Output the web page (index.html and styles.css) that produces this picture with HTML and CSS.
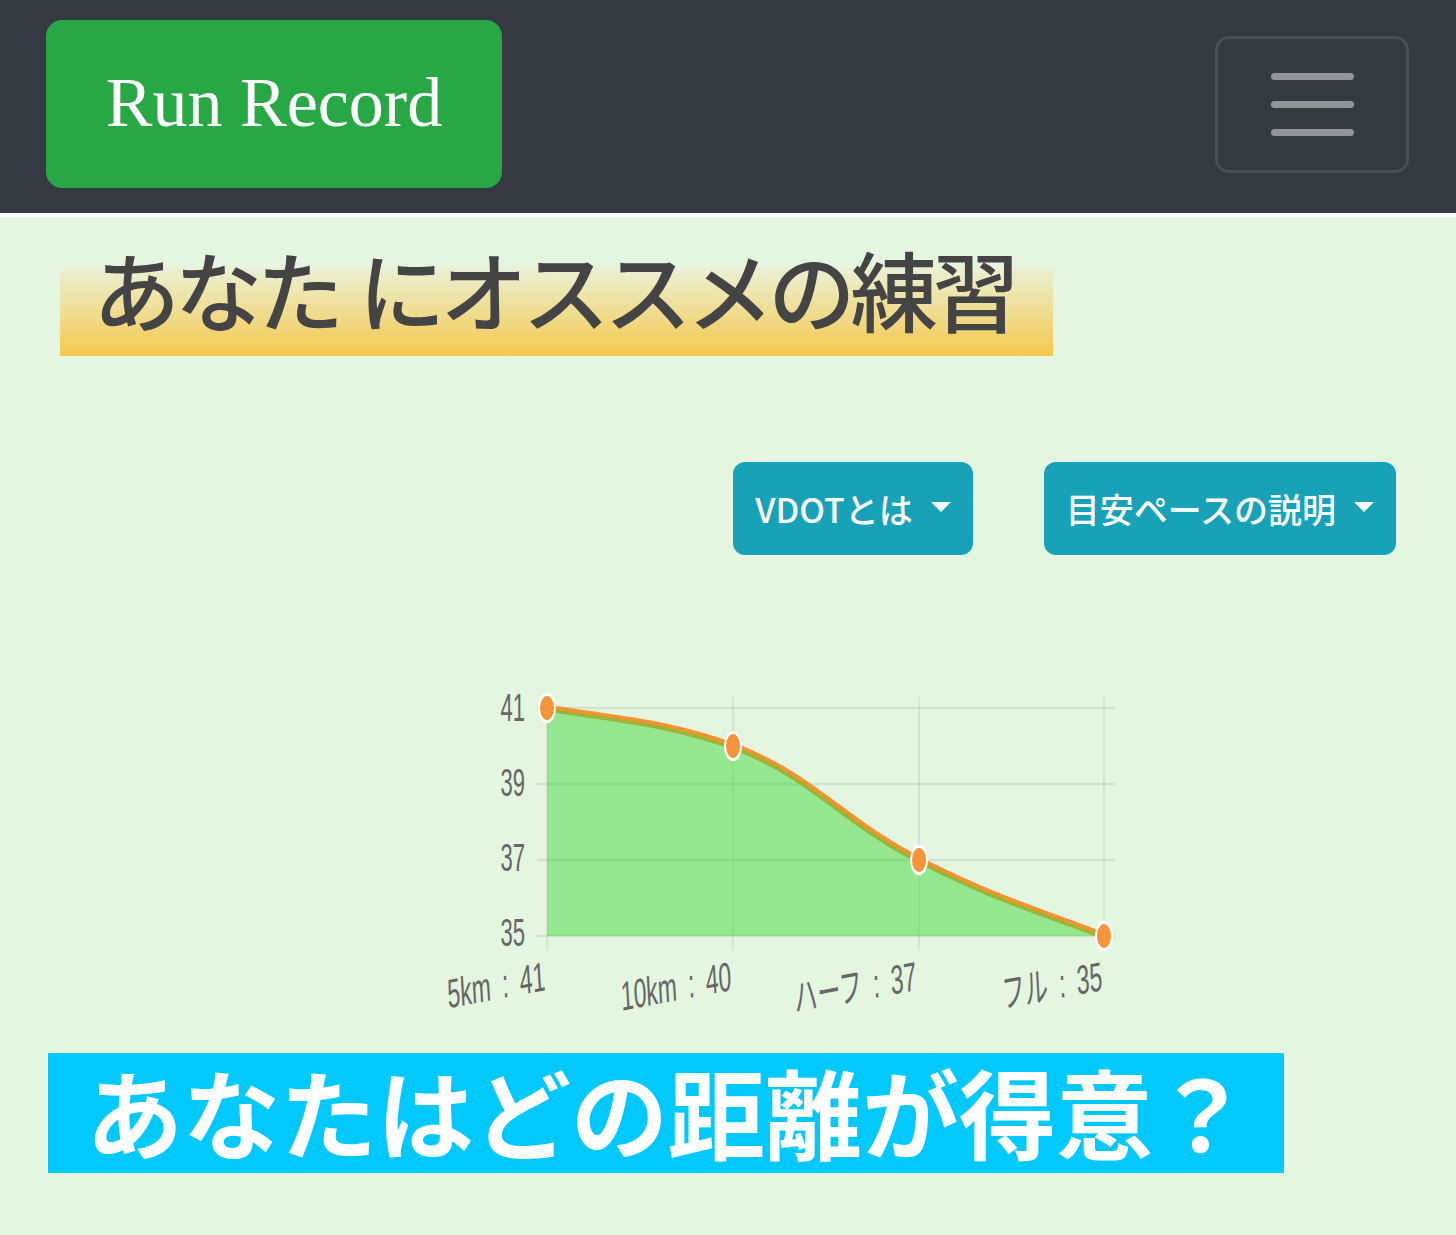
FILE: index.html
```html
<!DOCTYPE html>
<html lang="ja">
<head>
<meta charset="utf-8">
<title>Run Record</title>
<link rel="stylesheet" href="styles.css">
</head>
<body>
<nav class="navbar">
  <a class="brand" href="#">Run Record</a>
  <button class="toggler" type="button" aria-label="menu">
    <span class="bar"></span>
    <span class="bar"></span>
    <span class="bar"></span>
  </button>
</nav>
<main class="content">
  <h2 class="marker-heading">あなた にオススメの練習</h2>
  <div class="actions">
    <button class="btn-info dropdown-toggle" type="button">VDOTとは</button>
    <button class="btn-info dropdown-toggle" type="button">目安ペースの説明</button>
  </div>
  <div class="chart">
    <svg class="chart-svg" width="700" height="350" viewBox="440 680 700 350">
      <g class="grid">
        <line class="h" x1="537" y1="708" x2="1115" y2="708"/>
        <line class="h" x1="537" y1="784" x2="1115" y2="784"/>
        <line class="h" x1="537" y1="860" x2="1115" y2="860"/>
        <line class="h" x1="537" y1="936" x2="1115" y2="936"/>
        <line class="v" x1="547" y1="697" x2="547" y2="950"/>
        <line class="v" x1="733" y1="697" x2="733" y2="950"/>
        <line class="v" x1="919" y1="697" x2="919" y2="950"/>
        <line class="v" x1="1104" y1="697" x2="1104" y2="950"/>
      </g>
      <path class="series-line" d="M547,708 C621.4,720 663.8,722 733,746 C812.6,776 841.5,820.3 919,860 C989.9,896.3 1030,908 1104,936"/>
      <path class="series-area" d="M547,708 C621.4,720 663.8,722 733,746 C812.6,776 841.5,820.3 919,860 C989.9,896.3 1030,908 1104,936 L547,936 Z"/>
      <g class="point" transform="translate(547,708) scale(1,1.7)"><circle r="8"/></g>
      <g class="point" transform="translate(733,746) scale(1,1.7)"><circle r="8"/></g>
      <g class="point" transform="translate(919,860) scale(1,1.7)"><circle r="8"/></g>
      <g class="point" transform="translate(1104,936) scale(1,1.7)"><circle r="8"/></g>
      <g class="ylab">
        <text transform="translate(525,721) scale(1,1.8)">41</text>
        <text transform="translate(525,796) scale(1,1.8)">39</text>
        <text transform="translate(525,871) scale(1,1.8)">37</text>
        <text transform="translate(525,946) scale(1,1.8)">35</text>
      </g>
      <g class="xlab">
        <text transform="translate(546,990) scale(1,1.78) rotate(-6)">5km : 41</text>
        <text transform="translate(732,990) scale(1,1.78) rotate(-6)">10km : 40</text>
        <text transform="translate(917,990) scale(1,1.78) rotate(-6)">ハーフ : 37</text>
        <text transform="translate(1103,990) scale(1,1.78) rotate(-6)">フル : 35</text>
      </g>
    </svg>
  </div>
  <h2 class="banner">あなたはどの距離が得意？</h2>
</main>
</body>
</html>
```

FILE: styles.css
```css
html, body {
  margin: 0;
  padding: 0;
}

body {
  background: #e4f6df;
  font-family: "Noto Sans CJK JP", "Noto Sans", sans-serif;
  min-height: 1235px;
}

.navbar {
  display: flex;
  align-items: center;
  justify-content: space-between;
  background: #343a40;
  padding: 20px 47px 25px 46px;
  border-bottom: 4px solid #ffffff;
}

.brand {
  display: flex;
  align-items: center;
  justify-content: center;
  width: 456px;
  height: 168px;
  box-sizing: border-box;
  background: #28a745;
  border-radius: 16px;
  color: #ffffff;
  text-decoration: none;
  font-family: "Liberation Serif", "Times New Roman", serif;
  font-size: 70px;
  line-height: 1;
  padding-bottom: 2px;
}

.toggler {
  display: flex;
  flex-direction: column;
  align-items: center;
  justify-content: center;
  gap: 21px;
  width: 194px;
  height: 137px;
  box-sizing: border-box;
  background: transparent;
  border: 3px solid #4a4f55;
  border-radius: 14px;
  padding: 0;
}

.bar {
  display: block;
  width: 83px;
  height: 7px;
  border-radius: 4px;
  background: #939699;
}

.content {
  padding-top: 28px;
}

.marker-heading {
  margin: 0 0 0 60px;
  width: 993px;
  height: 111px;
  box-sizing: border-box;
  padding: 0 0 25px 33px;
  font-size: 87px;
  line-height: 86px;
  font-weight: 500;
  letter-spacing: -5px;
  word-spacing: 5px;
  color: #444444;
  white-space: nowrap;
  background: linear-gradient(180deg, #eaf1d6 0%, #f5c84c 100%) no-repeat bottom / 100% 89px;
}

.actions {
  display: flex;
  justify-content: flex-end;
  gap: 71px;
  padding-right: 60px;
  margin-top: 106px;
}

.btn-info {
  display: inline-flex;
  align-items: center;
  height: 93px;
  padding: 0 22px;
  border: none;
  border-radius: 12px;
  background: #17a2b8;
  color: #ffffff;
  font-family: "Noto Sans CJK JP", "Noto Sans", sans-serif;
  font-size: 34px;
  font-weight: 500;
  line-height: 1;
}

.dropdown-toggle::after {
  content: "";
  display: inline-block;
  margin-left: 18px;
  border-top: 10px solid #ffffff;
  border-left: 10px solid transparent;
  border-right: 10px solid transparent;
  margin-top: -4px;
}

.chart {
  margin-top: 125px;
  padding-left: 440px;
}

.chart-svg {
  display: block;
}

.grid line {
  stroke: rgba(0, 0, 0, 0.08);
}

.grid .h {
  stroke-width: 2.5;
}

.grid .v {
  stroke-width: 1.5;
}

.series-line {
  fill: none;
  stroke: #f7922f;
  stroke-width: 7;
}

.series-area {
  fill: rgba(68, 216, 63, 0.5);
}

.point circle {
  fill: #f7943a;
  stroke: #ffffff;
  stroke-width: 2;
}

.ylab text,
.xlab text {
  font-family: "Liberation Sans", "Noto Sans CJK JP", sans-serif;
  font-size: 22px;
  fill: #666666;
  text-anchor: end;
}

.xlab text {
  font-size: 23px;
  word-spacing: 5px;
}

.banner {
  margin: 23px 0 0 48px;
  width: 1236px;
  height: 120px;
  box-sizing: border-box;
  padding-left: 38px;
  background: #02c9fd;
  color: #ffffff;
  font-size: 97px;
  line-height: 114px;
  font-weight: 700;
  white-space: nowrap;
}
```
